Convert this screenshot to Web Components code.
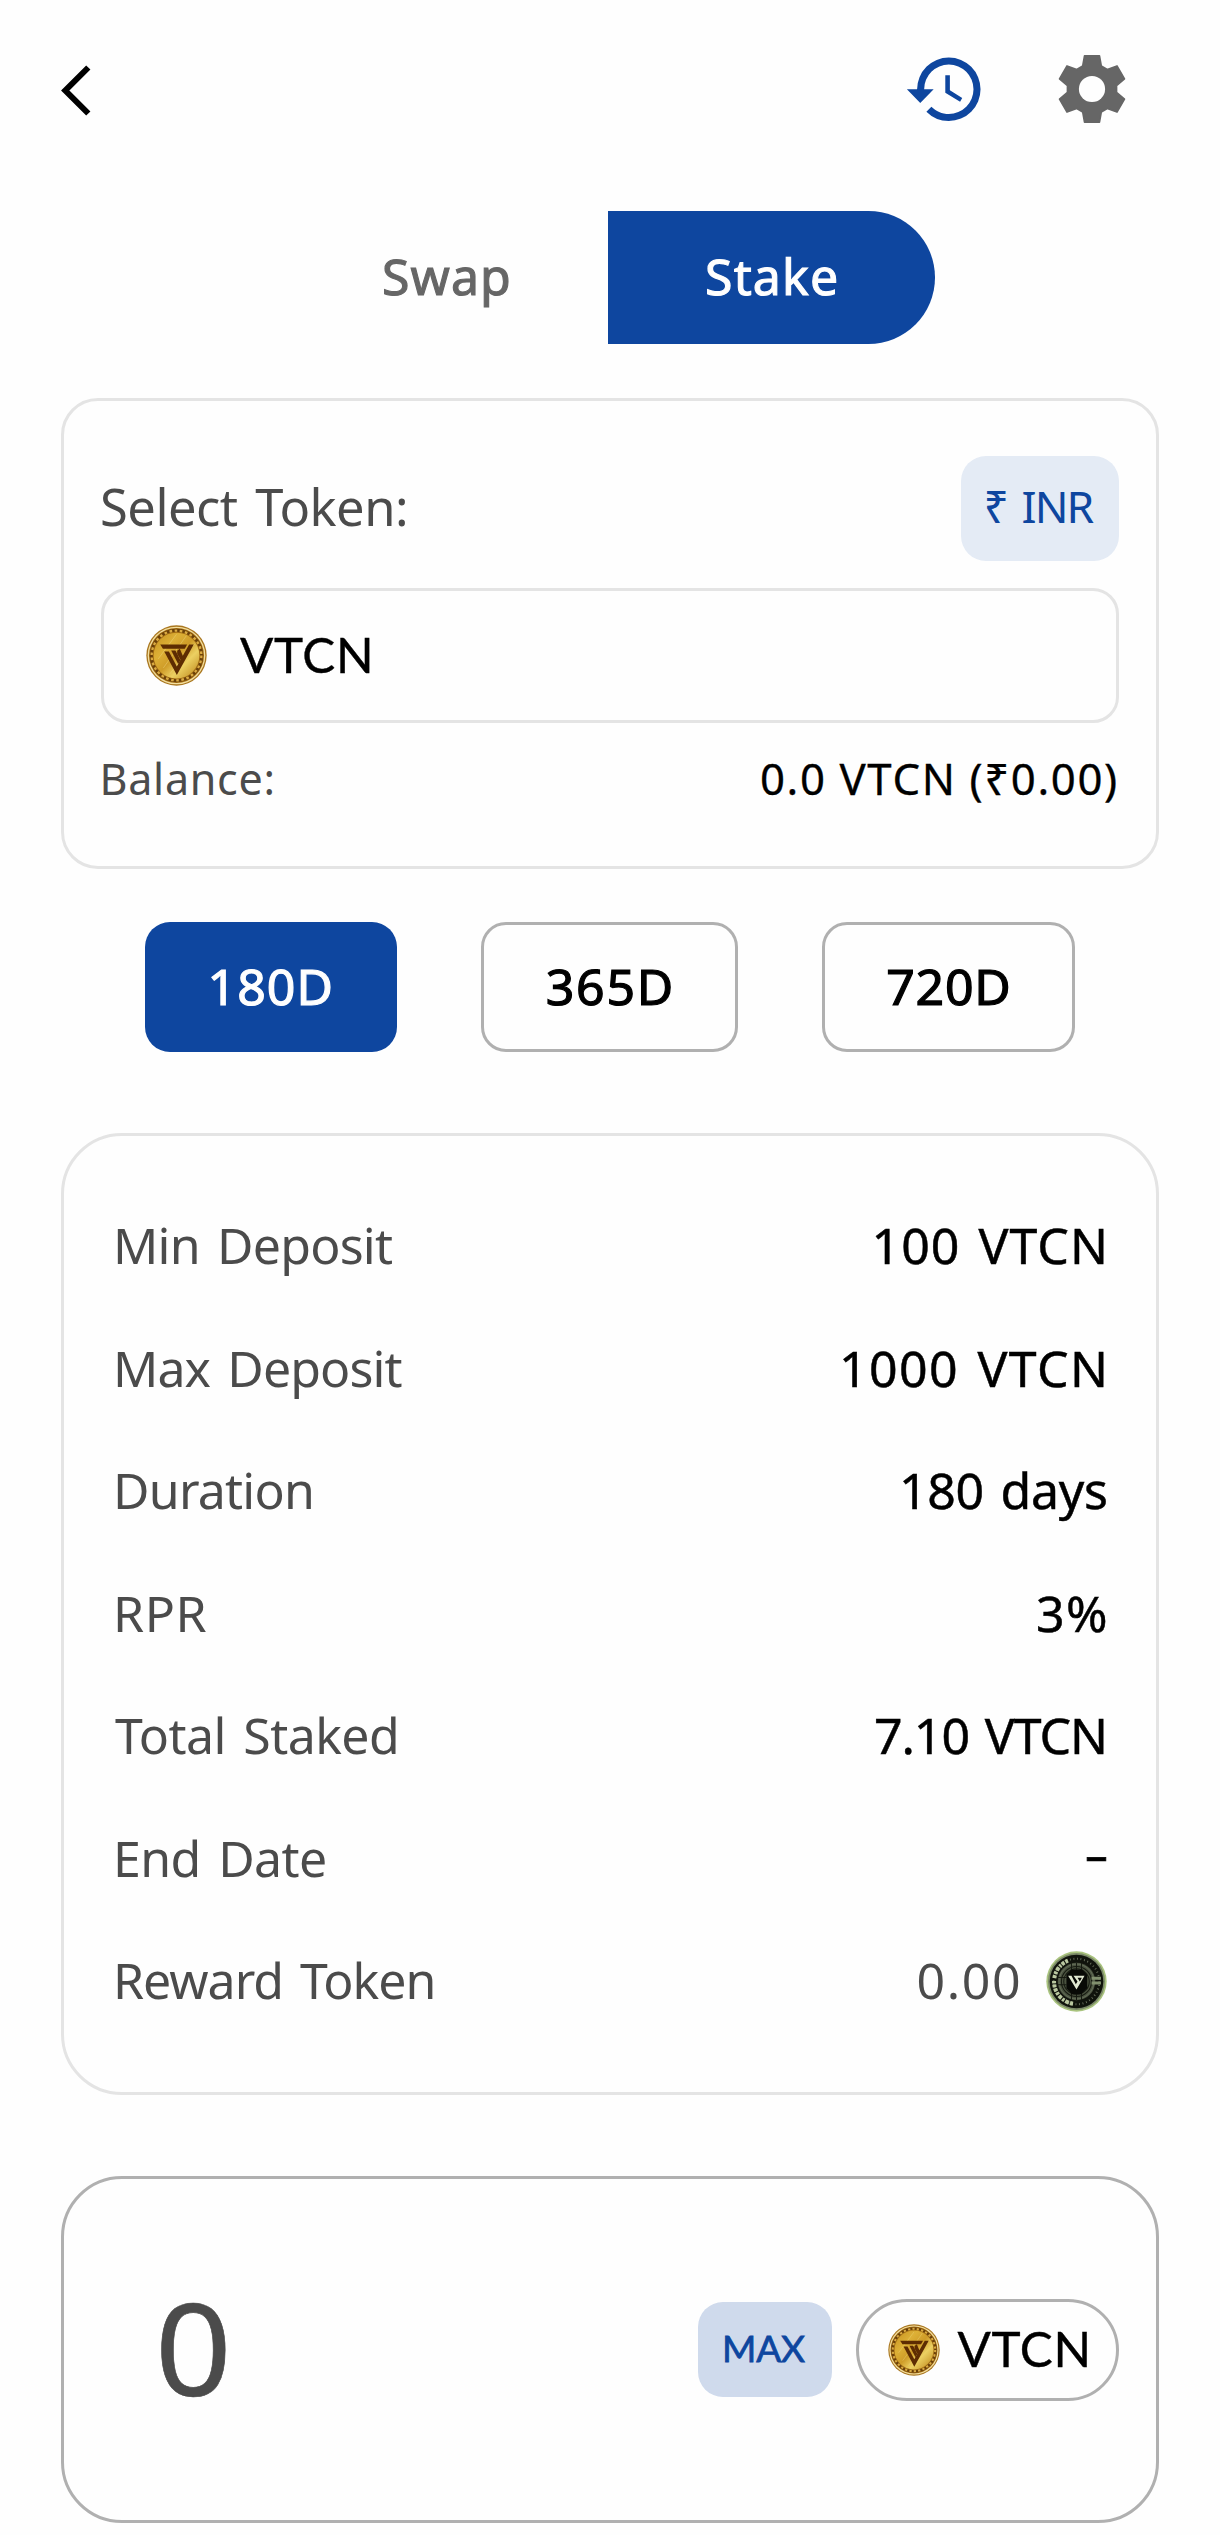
<!DOCTYPE html>
<html lang="en">
<head>
<meta charset="utf-8">
<title>Stake</title>
<style>
  html, body { margin: 0; background: #fefefe; }
  body { width: 1220px; height: 2535px; overflow: hidden; }
</style>
</head>
<body>
<stake-page></stake-page>
<script>
const ctx = document.createElement('canvas').getContext('2d');
const FAMILIES = {
  text: 'Lato, "Open Sans", sans-serif',
  num: '"Noto Sans", "Open Sans", sans-serif'
};

class UiElement extends HTMLElement {
  connectedCallback() {
    if (this.shadowRoot) return;
    this.attachShadow({ mode: 'open' }).innerHTML = this.view();
  }
}

/* A line of text whose box is its ink width by its cap height. */
class FitText extends UiElement {
  view() {
    const text = this.textContent;
    const a = (n, d) => this.getAttribute(n) || d;
    const cap = +a('cap', 36), w = +a('w', 100), weight = a('weight', '400');
    const word = +a('word', 0), stretch = +a('stretch', 1);
    const family = FAMILIES[a('face', 'text')];
    ctx.font = `${weight} 100px ${family}`;
    const ratio = ctx.measureText('H').actualBoundingBoxAscent / 100;
    const size = cap / ratio;
    ctx.font = `${weight} ${size}px ${family}`;
    const m = ctx.measureText(text);
    const ink = m.actualBoundingBoxLeft + m.actualBoundingBoxRight;
    const n = [...text].length;
    const gaps = text.split(' ').length - 1;
    const space = n > 1 ? (w - ink - gaps * word) / (n - 1) : 0;
    const top = cap / 2 - (m.fontBoundingBoxAscent - m.fontBoundingBoxDescent) / 2;
    return `<style>
      :host { display: flow-root; flex: none; width: ${w}px; height: ${cap}px; }
      span { display: block; width: max-content; white-space: pre; margin: ${top}px 0 0 ${m.actualBoundingBoxLeft * stretch}px;
        font: ${weight} ${size}px/${cap}px ${family}; letter-spacing: ${space}px; word-spacing: ${word}px;
        -webkit-text-stroke: ${a('bold', 0)}px currentColor;
        ${stretch !== 1 ? `transform: scaleX(${stretch}); transform-origin: 0 50%;` : ''} }
    </style><span><slot></slot></span>`;
  }
}
customElements.define('fit-text', FitText);

class UiIcon extends UiElement {
  view() {
    const name = this.getAttribute('name');
    let svg;
    if (name === 'back') {
      svg = `<svg width="30" height="52" viewBox="0 0 30 52"><path d="M27.3 2.5 4.3 25.5l23 23" fill="none" stroke="#000" stroke-width="6"/></svg>`;
    } else if (name === 'history') {
      svg = `<svg width="84.6" height="84.6" viewBox="0 0 24 24"><path fill="#0e469f" d="M13.3 8H12v5l4.2 2.55.6-1.1-3.5-2.15V8M13 3a9 9 0 0 0-9 9H1.1l3.8 3.9L8.7 12H6a7 7 0 0 1 14 0 7 7 0 0 1-7 7c-1.93 0-3.68-.79-4.94-2.06l-1.42 1.42A8.9 8.9 0 0 0 13 21a9 9 0 0 0 0-18"/></svg>`;
    } else {
      const pts = [];
      for (let i = 0; i < 6; i++) {
        const c = Math.cos(i * Math.PI / 3), s = Math.sin(i * Math.PI / 3);
        for (const [x, y] of [[-9.3, -23], [-7.5, -33.2], [7.5, -33.2], [9.3, -23]])
          pts.push(`${(x * c - y * s).toFixed(2)},${(x * s + y * c).toFixed(2)}`);
      }
      svg = `<svg width="70" height="70" viewBox="-35 -35 70 70"><polygon points="${pts.join(' ')}" fill="#666" stroke="#666" stroke-width="1.6" stroke-linejoin="round"/><circle r="13.1" fill="#fefefe"/></svg>`;
    }
    return `<style>:host{display:block;flex:none} svg{display:block}</style>${svg}`;
  }
}
customElements.define('ui-icon', UiIcon);

class GoldCoin extends UiElement {
  view() {
    const s = this.getAttribute('size');
    return `<style>:host{display:block;flex:none} svg{display:block}</style>
    <svg width="${s}" height="${s}" viewBox="-92 -92 184 184">
      <defs><linearGradient id="g" x1="0" y1="0" x2="1" y2="1">
        <stop offset="0" stop-color="#c4901f"/><stop offset=".3" stop-color="#ddb036"/><stop offset=".5" stop-color="#cf9c28"/><stop offset=".68" stop-color="#ecd062"/><stop offset="1" stop-color="#b98114"/>
      </linearGradient></defs>
      <circle r="91" fill="#a9761f"/><circle r="87" fill="#f3dfa0"/><circle r="83" fill="#a36c12"/>
      <circle r="76" fill="none" stroke="#6a400a" stroke-width="9"/>
      <circle r="75" fill="none" stroke="#dbab42" stroke-width="7" stroke-dasharray="8 7.7"/>
      <circle r="69" fill="url(#g)"/>
      <path d="M-40 38 30 -60M-20 55 55 -35M-55 10 0 -64" stroke="#f8e796" stroke-width="3" opacity=".35"/>
      <g fill="#5d2c02"><path d="M-49-33H32L25-20H-41Z"/><path d="M38-33H52L1 59-37-12H-23L1 33 12 13 2-5V-14L10-20 19 1Z"/><path d="M-16-15H-3L12 14 5 26Z"/></g>
    </svg>`;
  }
}
customElements.define('gold-coin', GoldCoin);

class DarkCoin extends UiElement {
  view() {
    return `<style>:host{display:block;flex:none} svg{display:block}</style>
    <svg width="61" height="61" viewBox="-91 -91 182 182">
      <circle r="90" fill="#a9c37e"/><circle r="85" fill="#7b8968"/><circle r="80" fill="#10130c"/>
      <circle r="67" fill="none" stroke="#b9c79f" stroke-width="12" pathLength="360" transform="rotate(112)" style="stroke-dasharray:8 3 6 3 9 3 7 3 8 3 7 3 6 7 8 3 7 3 9 3 5 3 8 3 7 210"/>
      <circle r="68" fill="none" stroke="#c4cfae" stroke-width="6" pathLength="360" style="stroke-dasharray:2 7" opacity=".55"/>
      <circle r="56" fill="#4a523f"/><circle r="52" fill="none" stroke="#7c8870" stroke-width="1.5"/>
      <g stroke="#161a11" stroke-width="3" fill="none"><circle r="45"/><circle r="38"/><path d="M-15-55V-30M0-55V-30M15-55V-30M-15 55V30M0 55V30M15 55V30M-55-12H-30M-55 10H-30"/></g>
      <path d="M-30-22-15-36H17L32-20V20L14 38H-14L-30 20Z" fill="#080a06"/>
      <path d="M45-14h28v9H45zM45 0h28v9H45z" fill="#81906e"/>
      <path d="M-25-17H-15L-2 8 3 0-9-17H24L0 24ZM3-11 10 0 16-11Z" fill="#e1e9d2" fill-rule="evenodd"/>
    </svg>`;
  }
}
customElements.define('dark-coin', DarkCoin);

class UiCard extends UiElement {
  view() {
    return `<style>:host{display:flex;flex-direction:column;box-sizing:border-box;margin:0 61px;border:3px solid var(--line,#e4e4e4);border-radius:var(--r,61px)}</style><slot></slot>`;
  }
}
customElements.define('ui-card', UiCard);

class UiButton extends UiElement {
  view() {
    return `<style>:host{display:flex;align-items:center;justify-content:center;box-sizing:border-box;flex:none;border-radius:25px;color:#000}
    :host([kind=outline]){border:3px solid #b0b0b0}
    :host([kind=solid]){background:#0e469f;color:#fefefe}
    :host([kind=soft]){background:#e4ebf5;color:#0e469f}
    :host([kind=max]){background:#cfdaec;color:#0e469f}</style><slot></slot>`;
  }
}
customElements.define('ui-button', UiButton);

class DetailRow extends UiElement {
  view() {
    return `<style>:host{display:flex;justify-content:space-between;height:36.5px;align-items:center;color:#000} ::slotted([slot=label]),::slotted([muted]){color:#4b4b4b}
    div{display:flex;align-items:center;gap:27px}</style><slot name="label"></slot><div><slot></slot></div>`;
  }
}
customElements.define('detail-row', DetailRow);

class StakePage extends UiElement {
  view() {
    const row = (label, lw, value, vw, right, ml = 0, extra = '') => `<detail-row style="margin-right:${right}px;margin-left:${ml}px"><fit-text slot="label" face="num" cap="36" w="${lw}" word="5">${label}</fit-text><fit-text face="num" cap="36" w="${vw}" word="4" bold=".5" ${extra}>${value}</fit-text></detail-row>`;
    return `<style>
      :host{display:flex;flex-direction:column;width:1220px;height:2535px}
      header{display:flex;justify-content:space-between;align-items:flex-start;padding:46.5px 93px 0 61px;height:165px;box-sizing:border-box}
      header>ui-icon{margin-top:18.5px}
      .tools{display:flex;align-items:center;gap:69px}
      .tabs{display:flex;margin:46px 0 0;height:133px;align-items:center}
      .tabs fit-text{margin-bottom:1px}
      .swap{color:#666;margin-left:384px;width:224px;display:flex}
      .stake{background:#0e469f;color:#fefefe;width:327px;height:133px;border-radius:0 67px 67px 0;display:flex;align-items:center;justify-content:center}
      .select{--r:37px;margin-top:54px;height:471px;padding:55px 37px 0}
      .line{display:flex;justify-content:space-between;align-items:center;color:#4b4b4b}
      .token{display:flex;align-items:center;box-sizing:border-box;height:135px;margin-top:27px;border:3px solid #e4e4e4;border-radius:26px;padding-left:42px;gap:33px;color:#000}
      .token fit-text{margin-bottom:1px}
      .balance{margin:41px 3px 0 2.5px}
      .terms{display:flex;margin:53px 0 0 145px;height:130px}
      .details{margin-top:81px;height:962px;padding:92px 0 0;}
      .rows{display:flex;flex-direction:column;gap:86px;padding-left:53px}
      .amount{--line:#b0b0b0;margin-top:81px;height:347px;flex-direction:row;align-items:center;padding:0 37px 0 97px;color:#4b4b4b}
      .pill{width:263px;height:102px;border-radius:51px;margin-left:24px;gap:18px}
    </style>
    <header><ui-icon name="back"></ui-icon><div class="tools"><ui-icon name="history"></ui-icon><ui-icon name="gear"></ui-icon></div></header>
    <div class="tabs"><div class="swap"><fit-text face="num" cap="36" w="124" bold="1.1">Swap</fit-text></div><div class="stake"><fit-text face="num" cap="36" w="129" bold="1.1">Stake</fit-text></div></div>
    <ui-card class="select">
      <div class="line"><fit-text face="num" cap="36.5" w="303" word="5" style="margin-left:1px">Select Token:</fit-text><ui-button kind="soft" style="width:158px;height:105px"><fit-text face="num" cap="32" w="107" word="5" style="margin-bottom:2px">₹ INR</fit-text></ui-button></div>
      <div class="token"><gold-coin size="61"></gold-coin><fit-text cap="36" w="130" bold=".4">VTCN</fit-text></div>
      <div class="line balance"><fit-text face="num" cap="31" w="169">Balance:</fit-text><fit-text face="num" cap="31.5" w="354" style="color:#000" bold=".3">0.0 VTCN (₹0.00)</fit-text></div>
    </ui-card>
    <div class="terms">
      <ui-button kind="solid" style="width:252px"><fit-text face="num" cap="36" w="119" bold="1.2">180D</fit-text></ui-button>
      <ui-button kind="outline" style="width:256.5px;margin-left:84px"><fit-text face="num" cap="36" w="123" bold="1.2">365D</fit-text></ui-button>
      <ui-button kind="outline" style="width:253.5px;margin-left:84px"><fit-text face="num" cap="36" w="120" bold="1.2">720D</fit-text></ui-button>
    </div>
    <ui-card class="details"><div class="rows">
      ${row('Min Deposit', 275, '100 VTCN', 228.5, 52)}
      ${row('Max Deposit', 284.5, '1000 VTCN', 261, 52)}
      ${row('Duration', 194, '180 days', 203, 50)}
      ${row('RPR', 89.5, '3%', 68, 50)}
      ${row('Total Staked', 281, '7.10 VTCN', 228, 52, -2)}
      ${row('End Date', 208, '-', 18, 51, 0, 'stretch="1.55" style="margin-bottom:10px"')}
      <detail-row style="margin-right:49px"><fit-text slot="label" face="num" cap="36" w="315.5" word="5">Reward Token</fit-text><fit-text muted face="num" cap="36" w="100.5">0.00</fit-text><dark-coin></dark-coin></detail-row>
    </div></ui-card>
    <ui-card class="amount"><fit-text face="num" cap="92" w="63" stretch="1.05" bold=".6">0</fit-text>
      <ui-button kind="max" style="width:134px;height:95px;margin-left:auto"><fit-text cap="27" w="80" bold=".8" style="margin-bottom:1px">MAX</fit-text></ui-button>
      <ui-button kind="outline" class="pill"><gold-coin size="52"></gold-coin><fit-text cap="36" w="130" bold=".4" style="margin-bottom:1px">VTCN</fit-text></ui-button>
    </ui-card>`;
  }
}
customElements.define('stake-page', StakePage);
</script>
</body>
</html>
